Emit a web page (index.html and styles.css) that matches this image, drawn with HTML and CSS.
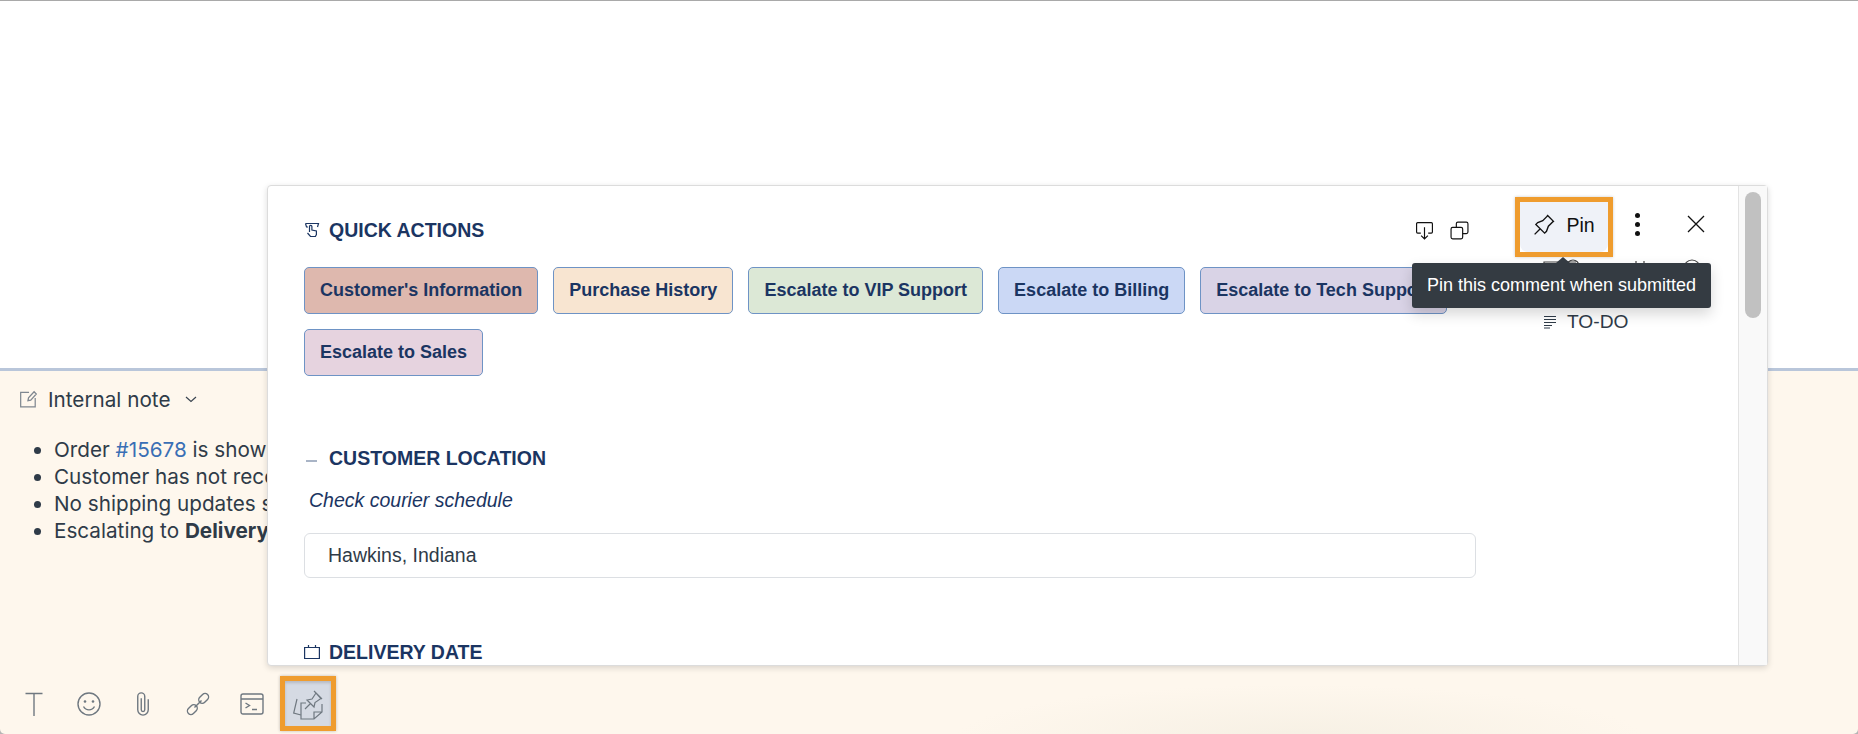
FILE: index.html
```html
<!DOCTYPE html>
<html lang="en">
<head>
<meta charset="utf-8">
<title>Internal note</title>
<link rel="stylesheet" href="styles.css">
</head>
<body>
<div class="top-area"></div>
<section class="composer">
  <div class="note-head">
    <svg class="ic-note" viewBox="0 0 17 16"><path d="M9 2H1.500v13h13V7M8 9.500l.5-2.500L13.500 1.500l2 2L10.500 9z"/></svg>
    <span>Internal note</span>
    <svg class="ic-chev" viewBox="0 0 12 7"><path d="M1 1l5 4.500L11 1"/></svg>
  </div>
  <ul class="note-list">
    <li>Order <a class="ref">#15678</a> is showing as delivered</li>
    <li>Customer has not received the parcel</li>
    <li>No shipping updates since dispatch</li>
    <li>Escalating to <b>Delivery Team</b></li>
  </ul>
  <div class="toolbar">
    <button class="tool"><svg viewBox="0 0 24 24"><path d="M3.500 1.500h17M12 1.500V24"/></svg></button>
    <button class="tool"><svg viewBox="0 0 24 24"><circle cx="12" cy="12" r="11"/><circle class="fill" cx="8" cy="9.500" r="1.300"/><circle class="fill" cx="16" cy="9.500" r="1.300"/><path d="M6.500 14.500c2.500 4.500 8.500 4.500 11 0"/></svg></button>
    <button class="tool tool-clip"><svg viewBox="0 0 24 24"><path d="M10.500 7v10a1.500 1.500 0 0 0 3 0V5.500a3 3 0 0 0-6 0V17a4.500 4.500 0 0 0 9 0V8"/></svg></button>
    <button class="tool"><svg viewBox="0 0 24 24"><g transform="rotate(-45 12 12)"><rect x="-1.500" y="8.500" width="11" height="7" rx="3.500"/><rect x="14.500" y="8.500" width="11" height="7" rx="3.500"/><path d="M7 12h10"/></g></svg></button>
    <button class="tool"><svg viewBox="0 0 24 24"><rect x="1" y="2" width="22" height="20" rx="2"/><path d="M1 7h22M5.500 11l4 2.500-4 2.500M12 17.500h5"/></svg></button>
    <button class="tool tool-active"><svg viewBox="0 0 32 32"><path d="M5 11L1.700 25 9 27"/><path d="M14 15H9v16h13l8-7v-8M22 31v-7h8"/><path d="M24 5l-4 6-5 1 7 7 1-4.500 6-4zM22 3l8 8M18.500 15.500L13 21"/></svg></button>
  </div>
  <div class="glow"></div>
</section>

<div class="popup">
  <div class="popup-main">
    <header class="popup-head">
      <h2 class="title title-first">
        <svg class="ic-title" viewBox="0 0 16 16"><path d="M1.500 1.500h13l-1 3.500M4 5H2.500L1.500 1.500M5.500 10V4.500a1.200 1.200 0 0 1 2.400 0V8l4.500 1v3.500l-1 2H6.500L3.500 11"/></svg>
        QUICK ACTIONS
      </h2>
      <div class="head-actions">
        <button class="act"><svg viewBox="0 0 18 18"><path d="M5.500 11.500H2.500a1 1 0 0 1-1-1v-8a1 1 0 0 1 1-1h13a1 1 0 0 1 1 1v8a1 1 0 0 1-1 1h-3M9 6v11M5.800 13.800L9 17l3.200-3.200"/></svg></button>
        <button class="act"><svg viewBox="0 0 18 18"><rect x="1" y="6" width="11" height="11" rx="1.500"/><path d="M6 6V2.500A1.500 1.500 0 0 1 7.500 1h8A1.500 1.500 0 0 1 17 2.500v8a1.500 1.500 0 0 1-1.500 1.500H12"/></svg></button>
        <button class="pin-btn"><span class="pin-inner"><svg viewBox="0 0 24 24"><path d="M15 4.500l-4 4-4 1.500-1.500 1.500 7 7 1.500-1.500 1.500-4 4-4M9 15l-4.500 4.500M14.500 4l5.500 5.500"/></svg>Pin</span></button>
        <button class="kebab"><i></i><i></i><i></i></button>
        <button class="close"><svg viewBox="0 0 18 18"><path d="M1 1l16 16M17 1L1 17"/></svg></button>
      </div>
    </header>
    <div class="popup-body">
      <div class="form-col">
        <div class="chips">
          <button class="chip c1">Customer's Information</button>
          <button class="chip c2">Purchase History</button>
          <button class="chip c3">Escalate to VIP Support</button>
          <button class="chip c4">Escalate to Billing</button>
          <button class="chip c5">Escalate to Tech Support</button>
          <button class="chip c6">Escalate to Sales</button>
        </div>
        <h2 class="title title-location">
          <svg class="ic-title" viewBox="0 0 16 16"><path class="dash" d="M2 11h11"/></svg>
          CUSTOMER LOCATION
        </h2>
        <p class="hint">Check courier schedule</p>
        <div class="field">Hawkins, Indiana</div>
        <h2 class="title title-date">
          <svg class="ic-title" viewBox="0 0 16 16"><path d="M.6 3.500h14.800v11H.6zM4.500 1v3M11.500 1v3"/></svg>
          DELIVERY DATE
        </h2>
      </div>
      <aside class="side-col">
        <div class="side-row-hidden">
          <svg viewBox="0 0 160 20"><path d="M1 12V4h32"/><circle cx="30" cy="8" r="6"/><path d="M93 3v9M101 3v9"/><circle cx="149" cy="10" r="8"/></svg>
        </div>
        <div class="todo">
          <svg viewBox="0 0 14 14"><path d="M1 1.500h12M1 4.500h12M1 7.500h12M1 10.500h8M1 13h6"/></svg>
          TO-DO
        </div>
      </aside>
    </div>
  </div>
  <div class="scrollbar"><div class="thumb"></div></div>
  <div class="tooltip">Pin this comment when submitted</div>
</div>
</body>
</html>
```

FILE: styles.css
```css
* { box-sizing: border-box; }
html, body { height: 100%; }
body {
  margin: 0;
  height: 734px;
  overflow: hidden;
  display: flex;
  flex-direction: column;
  background: #b5b5b5;
  font-family: Inter, "Liberation Sans", sans-serif;
  color: #2f3b48;
  position: relative;
}
button { font: inherit; color: inherit; background: none; border: 0; padding: 0; }
svg { display: block; fill: none; stroke: currentColor; }

.top-area { height: 368px; flex: none; background: #fff; border-top: 1px solid #a9a9a9; }

.composer {
  flex: 1;
  position: relative;
  display: flex;
  flex-direction: column;
  background: #fef7ed;
  border-top: 3px solid #b9c6da;
  border-radius: 0 0 5px 5px;
  padding: 0 0 3px 20px;
  overflow: hidden;
}
.note-head {
  display: flex;
  align-items: center;
  height: 30px;
  margin-top: 13px;
  font-size: 20.700px;
  color: #2f3b48;
}
.ic-note { width: 19px; height: 18px; color: #7f8790; stroke-width: 1.100; margin-right: 10px; margin-left: -1px; }
.ic-chev { width: 12px; height: 7px; margin-left: 15px; color: #3a4550; stroke-width: 1.200; }

.note-list {
  margin: 22px 0 0;
  padding: 0 0 0 34px;
  font-size: 20.700px;
  line-height: 27px;
  color: #2f3b48;
  white-space: nowrap;
}
.ref { color: #3a6fb5; }

.toolbar {
  display: flex;
  align-items: center;
  margin-top: auto;
  margin-left: -20px;
  padding-left: 7px;
  position: relative;
  z-index: 1;
}
.tool {
  width: 54.500px;
  height: 55px;
  display: flex;
  align-items: center;
  justify-content: center;
  color: #6f7880;
}
.tool svg { width: 24px; height: 24px; stroke-width: 1.400; }
.tool-clip svg { width: 28px; height: 28px; stroke-width: 1.200; }
.tool .fill { fill: currentColor; stroke: none; }
.tool-active {
  width: 56px;
  background: #d5dae3;
  border: 5px solid #ef9c2e;
  box-shadow: inset 0 2px 3px rgba(0,0,0,.15), 0 0 3px rgba(0,0,0,.25);
}
.tool-active svg { width: 32px; height: 32px; stroke-width: 1.200; }

.glow {
  position: absolute;
  left: 950px;
  bottom: -60px;
  width: 700px;
  height: 110px;
  background: radial-gradient(ellipse at center, #f6f0e4 0%, rgba(246,240,228,0) 70%);
}

.popup {
  position: absolute;
  left: 267px;
  top: 185px;
  width: 1501px;
  height: 481px;
  display: flex;
  background: #fff;
  border: 1px solid #dcdcdc;
  border-radius: 4px;
  box-shadow: 0 2px 6px rgba(0,0,0,.14);
}
.popup-main { flex: 1; min-width: 0; overflow: hidden; padding-left: 36px; }
.scrollbar {
  width: 29px;
  flex: none;
  background: #f9f9f9;
  border-left: 1px solid #e3e3e3;
  padding: 6px 0 0 6px;
}
.thumb { width: 16px; height: 126px; background: #c1c1c1; border-radius: 8px; }

.popup-head {
  display: flex;
  align-items: center;
  justify-content: space-between;
  height: 60px;
  margin-top: 11px;
}
.title {
  display: flex;
  align-items: center;
  margin: 0;
  font-family: "Liberation Sans", sans-serif;
  font-size: 19.500px;
  font-weight: 700;
  color: #1b3562;
  line-height: 22px;
}
.ic-title { width: 16px; height: 16px; margin-right: 9px; flex: none; color: #1b3562; stroke-width: 1.200; }
.dash { stroke: #8d9bb3; stroke-width: 1.500; }
.title-first { margin-top: 6px; }
.title-location { margin-top: 71px; }
.title-date { margin-top: 63px; }

.head-actions { display: flex; align-items: center; height: 60px; margin-right: 33px; color: #111; }
.act { width: 35px; display: flex; justify-content: center; margin-top: 6px; }
.act svg { width: 19px; height: 19px; stroke-width: 1.100; }
.pin-btn {
  width: 98px;
  height: 60px;
  margin-left: 38px;
  background: #fff;
  border: 5px solid #ef9c2e;
  box-shadow: 0 0 3px rgba(0,0,0,.2);
  color: #111;
}
.pin-inner {
  height: 100%;
  display: flex;
  align-items: center;
  justify-content: center;
  gap: 7px;
  padding-bottom: 4px;
  background: #eff2f8;
  border-radius: 0 0 8px 8px;
  font-family: "Liberation Sans", sans-serif;
  font-size: 19.500px;
}
.pin-inner svg { width: 30px; height: 30px; stroke-width: 1.100; margin-left: -4px; }
.kebab { width: 16px; margin-left: 16px; margin-top: -6px; display: flex; flex-direction: column; align-items: center; gap: 4px; }
.kebab i { width: 5px; height: 5px; border-radius: 50%; background: #111; }
.close { margin-left: 42px; margin-top: -6px; }
.close svg { width: 18px; height: 18px; stroke-width: 1.300; }

.popup-body { display: flex; }
.form-col { width: 1172px; flex: none; padding-top: 10px; }
.chips { display: flex; flex-wrap: wrap; gap: 15px; }
.chip {
  height: 47px;
  padding: 0 15px;
  border: 1px solid #6e93c5;
  border-radius: 5px;
  font-family: "Liberation Sans", sans-serif;
  font-size: 18px;
  font-weight: 700;
  color: #1b3562;
  white-space: nowrap;
}
.c1 { background: #deb8ae; }
.c2 { background: #f8e5d1; }
.c3 { background: #dce8d6; }
.c4 { background: #cbd8f5; }
.c5 { background: #d9d3e6; }
.c6 { background: #e6d3df; }

.hint {
  margin: 20px 0 0 5px;
  font-family: "Liberation Sans", sans-serif;
  font-size: 19.500px;
  font-style: italic;
  line-height: 22px;
  color: #1b3562;
}
.field {
  height: 45px;
  margin-top: 22px;
  padding-left: 23px;
  display: flex;
  align-items: center;
  border: 1px solid #dcdfe3;
  border-radius: 6px;
  font-family: "Liberation Sans", sans-serif;
  font-size: 19.500px;
  color: #2f3b48;
}

.side-col { flex: 1; padding-left: 67px; }
.side-row-hidden svg { width: 160px; height: 20px; color: #444; stroke-width: 1.200; margin-top: 1px; }
.todo {
  display: flex;
  align-items: center;
  gap: 10px;
  margin-top: 32px;
  font-family: "Liberation Sans", sans-serif;
  font-size: 19.200px;
  line-height: 24px;
  color: #2f3b48;
}
.todo svg { width: 14px; height: 14px; stroke-width: 1; }

.tooltip {
  position: absolute;
  left: 1144px;
  top: 77px;
  width: 299px;
  height: 45px;
  display: flex;
  align-items: center;
  justify-content: center;
  background: #343b42;
  color: #fff;
  border-radius: 3px;
  font-family: "Liberation Sans", sans-serif;
  font-size: 18px;
  box-shadow: 0 6px 14px rgba(0,0,0,.16);
}
.tooltip::before {
  content: "";
  position: absolute;
  left: 144px;
  top: -6px;
  border: solid transparent;
  border-width: 0 7px 6px;
  border-bottom-color: #343b42;
}
```
